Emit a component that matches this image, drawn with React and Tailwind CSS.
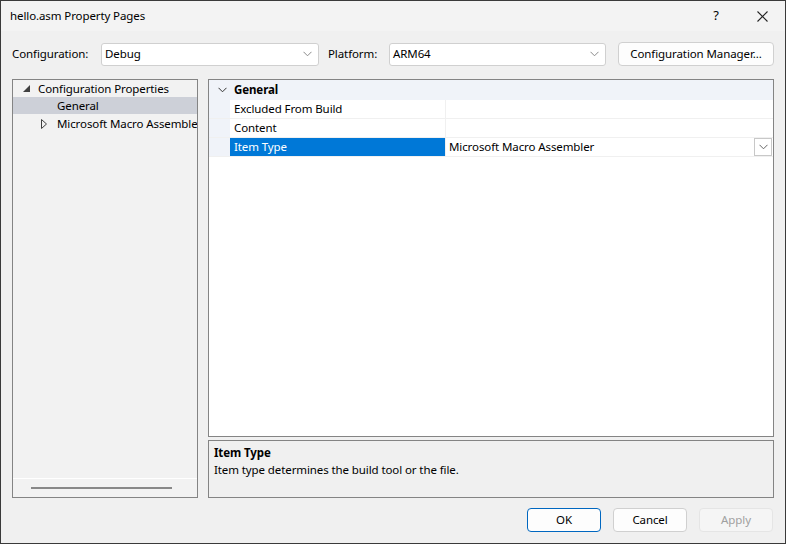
import React from 'react';

const font = { fontFamily: '"Noto Sans", "Open Sans", Arial, sans-serif' };

function Chevron({ className = '', color = '#606060' }) {
  return (
    <svg width="9" height="6" viewBox="0 0 9 6" className={`shrink-0 ${className}`}>
      <path d="M0.5 0.8 L4.5 4.8 L8.5 0.8" fill="none" stroke={color} strokeWidth="1" />
    </svg>
  );
}

function Select({ value, width }) {
  return (
    <div className={`${width} h-[23px] bg-white border border-[#d0d0d0] rounded-[3px] flex items-center justify-between pl-[3px] pr-[6px]`}>
      <span>{value}</span>
      <Chevron color="#8a8a8a" />
    </div>
  );
}

const rows = [
  { name: 'Excluded From Build', value: '' },
  { name: 'Content', value: '' },
  { name: 'Item Type', value: 'Microsoft Macro Assembler', selected: true },
];

export default function App() {
  return (
    <div style={font} className="w-[786px] h-[544px] bg-[#f0f0f0] border border-[#3a3a3a] flex flex-col text-[11.5px] tracking-[-0.1px] text-black overflow-hidden">
      {/* Title bar */}
      <div className="h-[30px] flex items-center justify-between pl-[9px] bg-[#f3f3f3]">
        <span>hello.asm Property Pages</span>
        <div className="flex items-center h-full">
          <span className="w-[46px] text-center text-[13px]">?</span>
          <span className="w-[46px] flex justify-center">
            <svg width="11" height="11" viewBox="0 0 11 11">
              <path d="M0.5 0.5 L10.5 10.5 M10.5 0.5 L0.5 10.5" stroke="#222" strokeWidth="1.1" />
            </svg>
          </span>
        </div>
      </div>

      {/* Configuration row */}
      <div className="mt-[11px] h-[24px] flex items-center pl-[11px]">
        <span className="w-[89px]">Configuration:</span>
        <Select value="Debug" width="w-[218px]" />
        <span className="ml-[9px] w-[61px]">Platform:</span>
        <Select value="ARM64" width="w-[217px]" />
        <button className="ml-[12px] w-[156px] h-[24px] bg-[#fdfdfd] border border-[#d0d0d0] rounded-[4px] text-center">
          Configuration Manager...
        </button>
      </div>

      {/* Main area */}
      <div className="mt-[13px] h-[419px] flex pl-[11px] gap-[10px]">
        {/* Tree */}
        <div className="w-[186px] h-full border border-[#848484] bg-[#f2f2f2] flex flex-col">
          <div className="flex-1 overflow-hidden whitespace-nowrap">
            <div className="h-[17px] flex items-center">
              <svg width="7" height="7" viewBox="0 0 7 7" className="shrink-0 ml-[10px] mr-[8px]">
                <path d="M7 0 L7 7 L0 7 Z" fill="#404040" />
              </svg>
              <span>Configuration Properties</span>
            </div>
            <div className="h-[17px] flex items-center bg-[#cdd0d8] pl-[44px]">General</div>
            <div className="h-[19px] flex items-center">
              <svg width="6" height="10" viewBox="0 0 6 10" className="shrink-0 ml-[28px] mr-[10px]">
                <path d="M0.5 0.5 L5.5 5 L0.5 9.5 Z" fill="none" stroke="#404040" strokeWidth="1" />
              </svg>
              <span className="shrink-0">Microsoft Macro Assembler</span>
            </div>
          </div>
          <div className="h-[19px] border-t border-white flex items-center pl-[18px]">
            <div className="w-[141px] h-[2px] bg-[#888888]" />
          </div>
        </div>

        {/* Right side */}
        <div className="w-[566px] h-full flex flex-col gap-[3px]">
          <div className="flex-1 bg-white border border-[#848484] overflow-hidden">
            <div className="h-[20px] flex items-center bg-[#f0f3f9]">
              <span className="w-[25px] flex justify-center pl-[1px]">
                <Chevron color="#333" />
              </span>
              <span className="font-bold">General</span>
            </div>
            {rows.map((r) => (
              <div key={r.name} className="h-[19px] flex border-b border-[#f0f0f0]">
                <div className="w-[21px] bg-[#f0f3f9]" />
                <div className={`w-[215px] flex items-center pl-[4px] ${r.selected ? 'bg-[#0078d7] text-white' : ''}`}>
                  {r.name}
                </div>
                <div className="flex-1 flex items-center justify-between border-l border-[#f0f0f0] pl-[3px]">
                  <span>{r.value}</span>
                  {r.selected && (
                    <span className="w-[18px] h-[18px] mr-[1px] border border-[#c8c8c8] bg-white flex items-center justify-center">
                      <Chevron color="#666" />
                    </span>
                  )}
                </div>
              </div>
            ))}
          </div>
          <div className="h-[58px] bg-[#f0f0f0] border border-[#848484] px-[5px] pt-[3px]">
            <div className="font-bold leading-[17px]">Item Type</div>
            <div className="leading-[17px]">Item type determines the build tool or the file.</div>
          </div>
        </div>
      </div>

      {/* Buttons */}
      <div className="mt-[10px] flex justify-end gap-[12px] pr-[12px]">
        <button className="w-[74px] h-[24px] bg-[#fdfdfd] border border-[#0067c0] rounded-[4px]">OK</button>
        <button className="w-[74px] h-[24px] bg-[#fdfdfd] border border-[#d0d0d0] rounded-[4px]">Cancel</button>
        <button className="w-[74px] h-[24px] bg-[#f5f5f5] border border-[#e5e5e5] rounded-[4px] text-[#a0a0a0]">Apply</button>
      </div>
    </div>
  );
}
